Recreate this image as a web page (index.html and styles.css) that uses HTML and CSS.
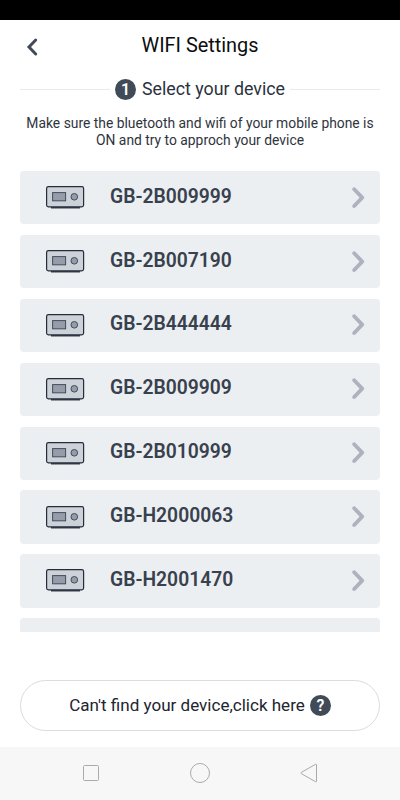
FILE: index.html
```html
<!DOCTYPE html>
<html lang="en">

<head>
  <meta charset="UTF-8">
  <meta name="viewport" content="width=device-width, initial-scale=1.0">
  <title>WIFI Settings</title>
  <link rel="stylesheet" href="styles.css">
</head>

<body>
  <!-- shared icons -->
  <svg class="icons" width="0" height="0">
    <symbol id="device" viewBox="0 0 40 25">
      <path d="M6 22.6h29" stroke="#39404f" stroke-width="1.8" />
      <rect x="1.6" y="1.6" width="37" height="20.3" rx="1.8" fill="#cdd1d8" stroke="#252c3a" stroke-width="1.2" />
      <rect x="7.6" y="7.6" width="13" height="8.2" fill="#969ca9" stroke="#454c5a" />
      <circle cx="29.3" cy="11.8" r="3.3" fill="#969ca9" stroke="#454c5a" />
    </symbol>
    <symbol id="arrow" viewBox="0 0 14 22">
      <path d="M3.2 2.2L11.200 10.6L3.2 19" fill="none" stroke="#acb3be" stroke-width="3.8" stroke-linecap="round" stroke-linejoin="round" />
    </symbol>
  </svg>

  <div class="status-bar"></div>

  <header class="header">
    <svg class="back" width="12" height="20" viewBox="0 0 12 20">
      <path d="M9.700 3L3 10L9.700 17" fill="none" stroke="#414b58" stroke-width="3" stroke-linecap="round" />
    </svg>
    <h1>WIFI Settings</h1>
  </header>

  <div class="step">
    <span class="line"></span>
    <span class="badge">1</span>
    <h2>Select your device</h2>
    <span class="line"></span>
  </div>

  <p class="hint">Make sure the bluetooth and wifi of your mobile phone is<br>ON and try to approch your device</p>

  <ul class="device-list">
    <li class="device"><svg class="device-icon"><use href="#device" /></svg><span class="name">GB-2B009999</span><svg class="arrow"><use href="#arrow" /></svg></li>
    <li class="device"><svg class="device-icon"><use href="#device" /></svg><span class="name">GB-2B007190</span><svg class="arrow"><use href="#arrow" /></svg></li>
    <li class="device"><svg class="device-icon"><use href="#device" /></svg><span class="name">GB-2B444444</span><svg class="arrow"><use href="#arrow" /></svg></li>
    <li class="device"><svg class="device-icon"><use href="#device" /></svg><span class="name">GB-2B009909</span><svg class="arrow"><use href="#arrow" /></svg></li>
    <li class="device"><svg class="device-icon"><use href="#device" /></svg><span class="name">GB-2B010999</span><svg class="arrow"><use href="#arrow" /></svg></li>
    <li class="device"><svg class="device-icon"><use href="#device" /></svg><span class="name">GB-H2000063</span><svg class="arrow"><use href="#arrow" /></svg></li>
    <li class="device"><svg class="device-icon"><use href="#device" /></svg><span class="name">GB-H2001470</span><svg class="arrow"><use href="#arrow" /></svg></li>
    <li class="device"></li>
  </ul>

  <button class="help" type="button">
    <span class="help-text">Can't find your device,click here</span>
    <span class="badge">?</span>
  </button>

  <nav class="nav-bar">
    <svg width="20" height="20" viewBox="0 0 20 20"><rect x="2.5" y="2.5" width="15" height="15" rx="1" /></svg>
    <svg width="20" height="20" viewBox="0 0 20 20"><circle cx="10" cy="10" r="9.5" /></svg>
    <svg width="20" height="20" viewBox="0 0 20 20"><path d="M17.5 1.8v16.4q0 1-1 .5L2.3 10.6q-1-.6 0-1.2L16.500 1.300q1-.5 1 .5z" /></svg>
  </nav>
</body>

</html>
```

FILE: styles.css
```css
* {
  box-sizing: border-box;
}

body {
  display: flex;
  flex-direction: column;
  height: 800px;
  margin: 0;
  background-color: #fff;
  font-family: Roboto, "Liberation Sans", sans-serif;
  overflow: hidden;
}

.icons {
  position: absolute;
}

.status-bar {
  height: 20px;
  background-color: #000;
}

.header {
  display: grid;
  grid-template-columns: 40px 1fr 40px;
  align-items: center;
  height: 52px;
}

.back {
  margin-left: 26px;
  margin-top: 1px;
}

h1 {
  margin: 0;
  font-size: 19.9px;
  font-weight: 400;
  line-height: 24px;
  text-align: center;
  color: #0c0d10;
}

.step {
  display: flex;
  align-items: center;
  height: 34px;
  padding: 0 20px;
}

.line {
  flex: 1;
  height: 1px;
  background-color: #e9e9eb;
}

.badge {
  width: 21px;
  height: 21px;
  border-radius: 50%;
  background-color: #414b58;
  color: #fff;
  font-size: 16px;
  font-weight: 600;
  line-height: 21px;
  text-align: center;
}

.step .badge {
  margin-left: 5px;
}

h2 {
  margin: 0 5px 0 6px;
  font-size: 17.8px;
  font-weight: 400;
  line-height: 22px;
  color: #2b323d;
}

.hint {
  margin: 9px 0 0;
  font-size: 13.85px;
  line-height: 16.500px;
  text-align: center;
  white-space: nowrap;
  color: #2f343d;
}

.device-list {
  display: flex;
  flex-direction: column;
  gap: 10.600px;
  height: 461px;
  margin: 23px 20px 0;
  padding: 0;
  list-style: none;
  overflow: hidden;
}

.device {
  display: flex;
  flex-shrink: 0;
  align-items: center;
  height: 53.3px;
  padding: 0 15px 0 25px;
  border-radius: 4px;
  background-color: #eceff2;
}

.device-icon {
  width: 40px;
  height: 25px;
}

.name {
  flex: 1;
  margin: 0 0 2px 25px;
  font-size: 19.3px;
  font-weight: 600;
  line-height: 22px;
  color: #38414e;
}

.arrow {
  width: 14px;
  height: 22px;
}

.help {
  display: flex;
  align-items: center;
  justify-content: center;
  gap: 5px;
  height: 51px;
  margin: 48px 20px 0;
  padding: 0;
  border: 1px solid #dcdcde;
  border-radius: 26px;
  background-color: #fff;
  font-family: inherit;
  font-size: 17.05px;
  color: #20252e;
}

.help-text {
  padding-bottom: 2px;
}

.nav-bar {
  display: flex;
  align-items: center;
  justify-content: center;
  gap: 89px;
  height: 53px;
  margin-top: auto;
  padding-bottom: 1px;
  background-color: #f7f7f7;
}

.nav-bar svg {
  fill: none;
  stroke: #aaa;
  stroke-width: 1;
}
```
